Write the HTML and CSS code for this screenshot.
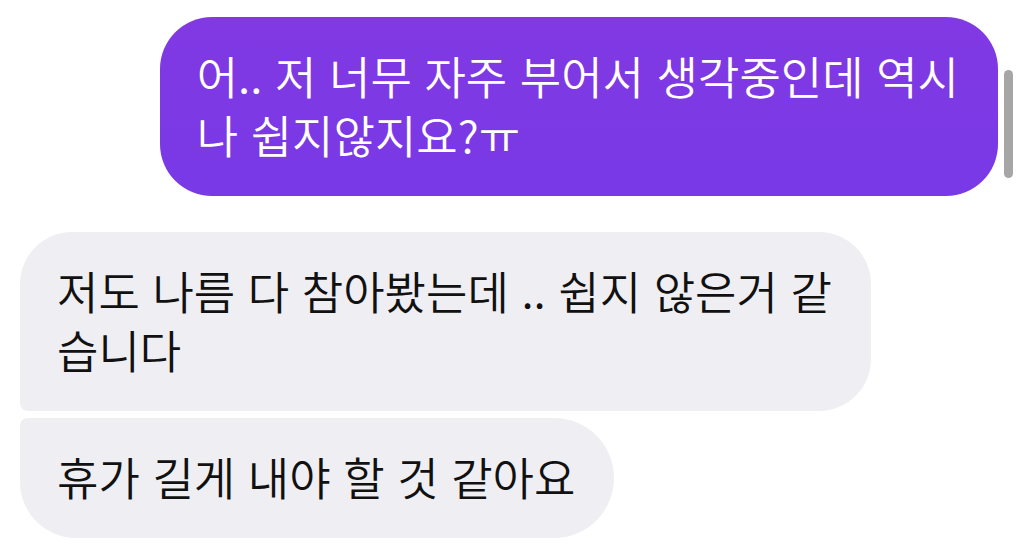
FILE: index.html
```html
<!DOCTYPE html>
<html lang="ko">
<head>
<meta charset="utf-8">
<link rel="stylesheet" href="styles.css">
</head>
<body>
<div class="chat">
  <div class="row row-out">
    <div class="bubble out">어.. 저 너무 자주 부어서 생각중인데 역시<br>나 쉽지않지요?ㅠ</div>
  </div>
  <div class="group-in">
    <div class="row row-in">
      <div class="bubble in first">저도 나름 다 참아봤는데 .. 쉽지 않은거 같<br>습니다</div>
    </div>
    <div class="row row-in">
      <div class="bubble in last">휴가 길게 내야 할 것 같아요</div>
    </div>
  </div>
</div>
<div class="scrollbar"></div>
</body>
</html>
```

FILE: styles.css
```css
html, body {
  margin: 0;
  padding: 0;
  background: #ffffff;
}
body {
  width: 1022px;
  height: 555px;
  overflow: hidden;
  position: relative;
  font-family: "Noto Sans CJK KR", "Noto Sans", sans-serif;
}
.chat {
  display: flex;
  flex-direction: column;
  padding: 17px 24px 0 20px;
  gap: 36px;
}
.row {
  display: flex;
}
.row-out {
  justify-content: flex-end;
}
.row-in {
  justify-content: flex-start;
}
.group-in {
  display: flex;
  flex-direction: column;
  gap: 7px;
}
.bubble {
  font-size: 45px;
  font-weight: 350;
  line-height: 59px;
  padding: 29px 39px 32px 37px;
  border-radius: 52px;
  white-space: nowrap;
}
.out {
  background: linear-gradient(180deg, #8139e3 0%, #7839e6 100%);
  color: #ffffff;
}
.in {
  background: #efeff3;
  color: #111111;
}
.in.first {
  border-bottom-left-radius: 8px;
}
.in.last {
  border-top-left-radius: 8px;
  border-top-right-radius: 60px;
  border-bottom-right-radius: 60px;
  border-bottom-left-radius: 56px;
}
.scrollbar {
  position: absolute;
  left: 1004px;
  top: 70px;
  width: 9px;
  height: 108px;
  border-radius: 5px;
  background: #a6a6a6;
}
```
